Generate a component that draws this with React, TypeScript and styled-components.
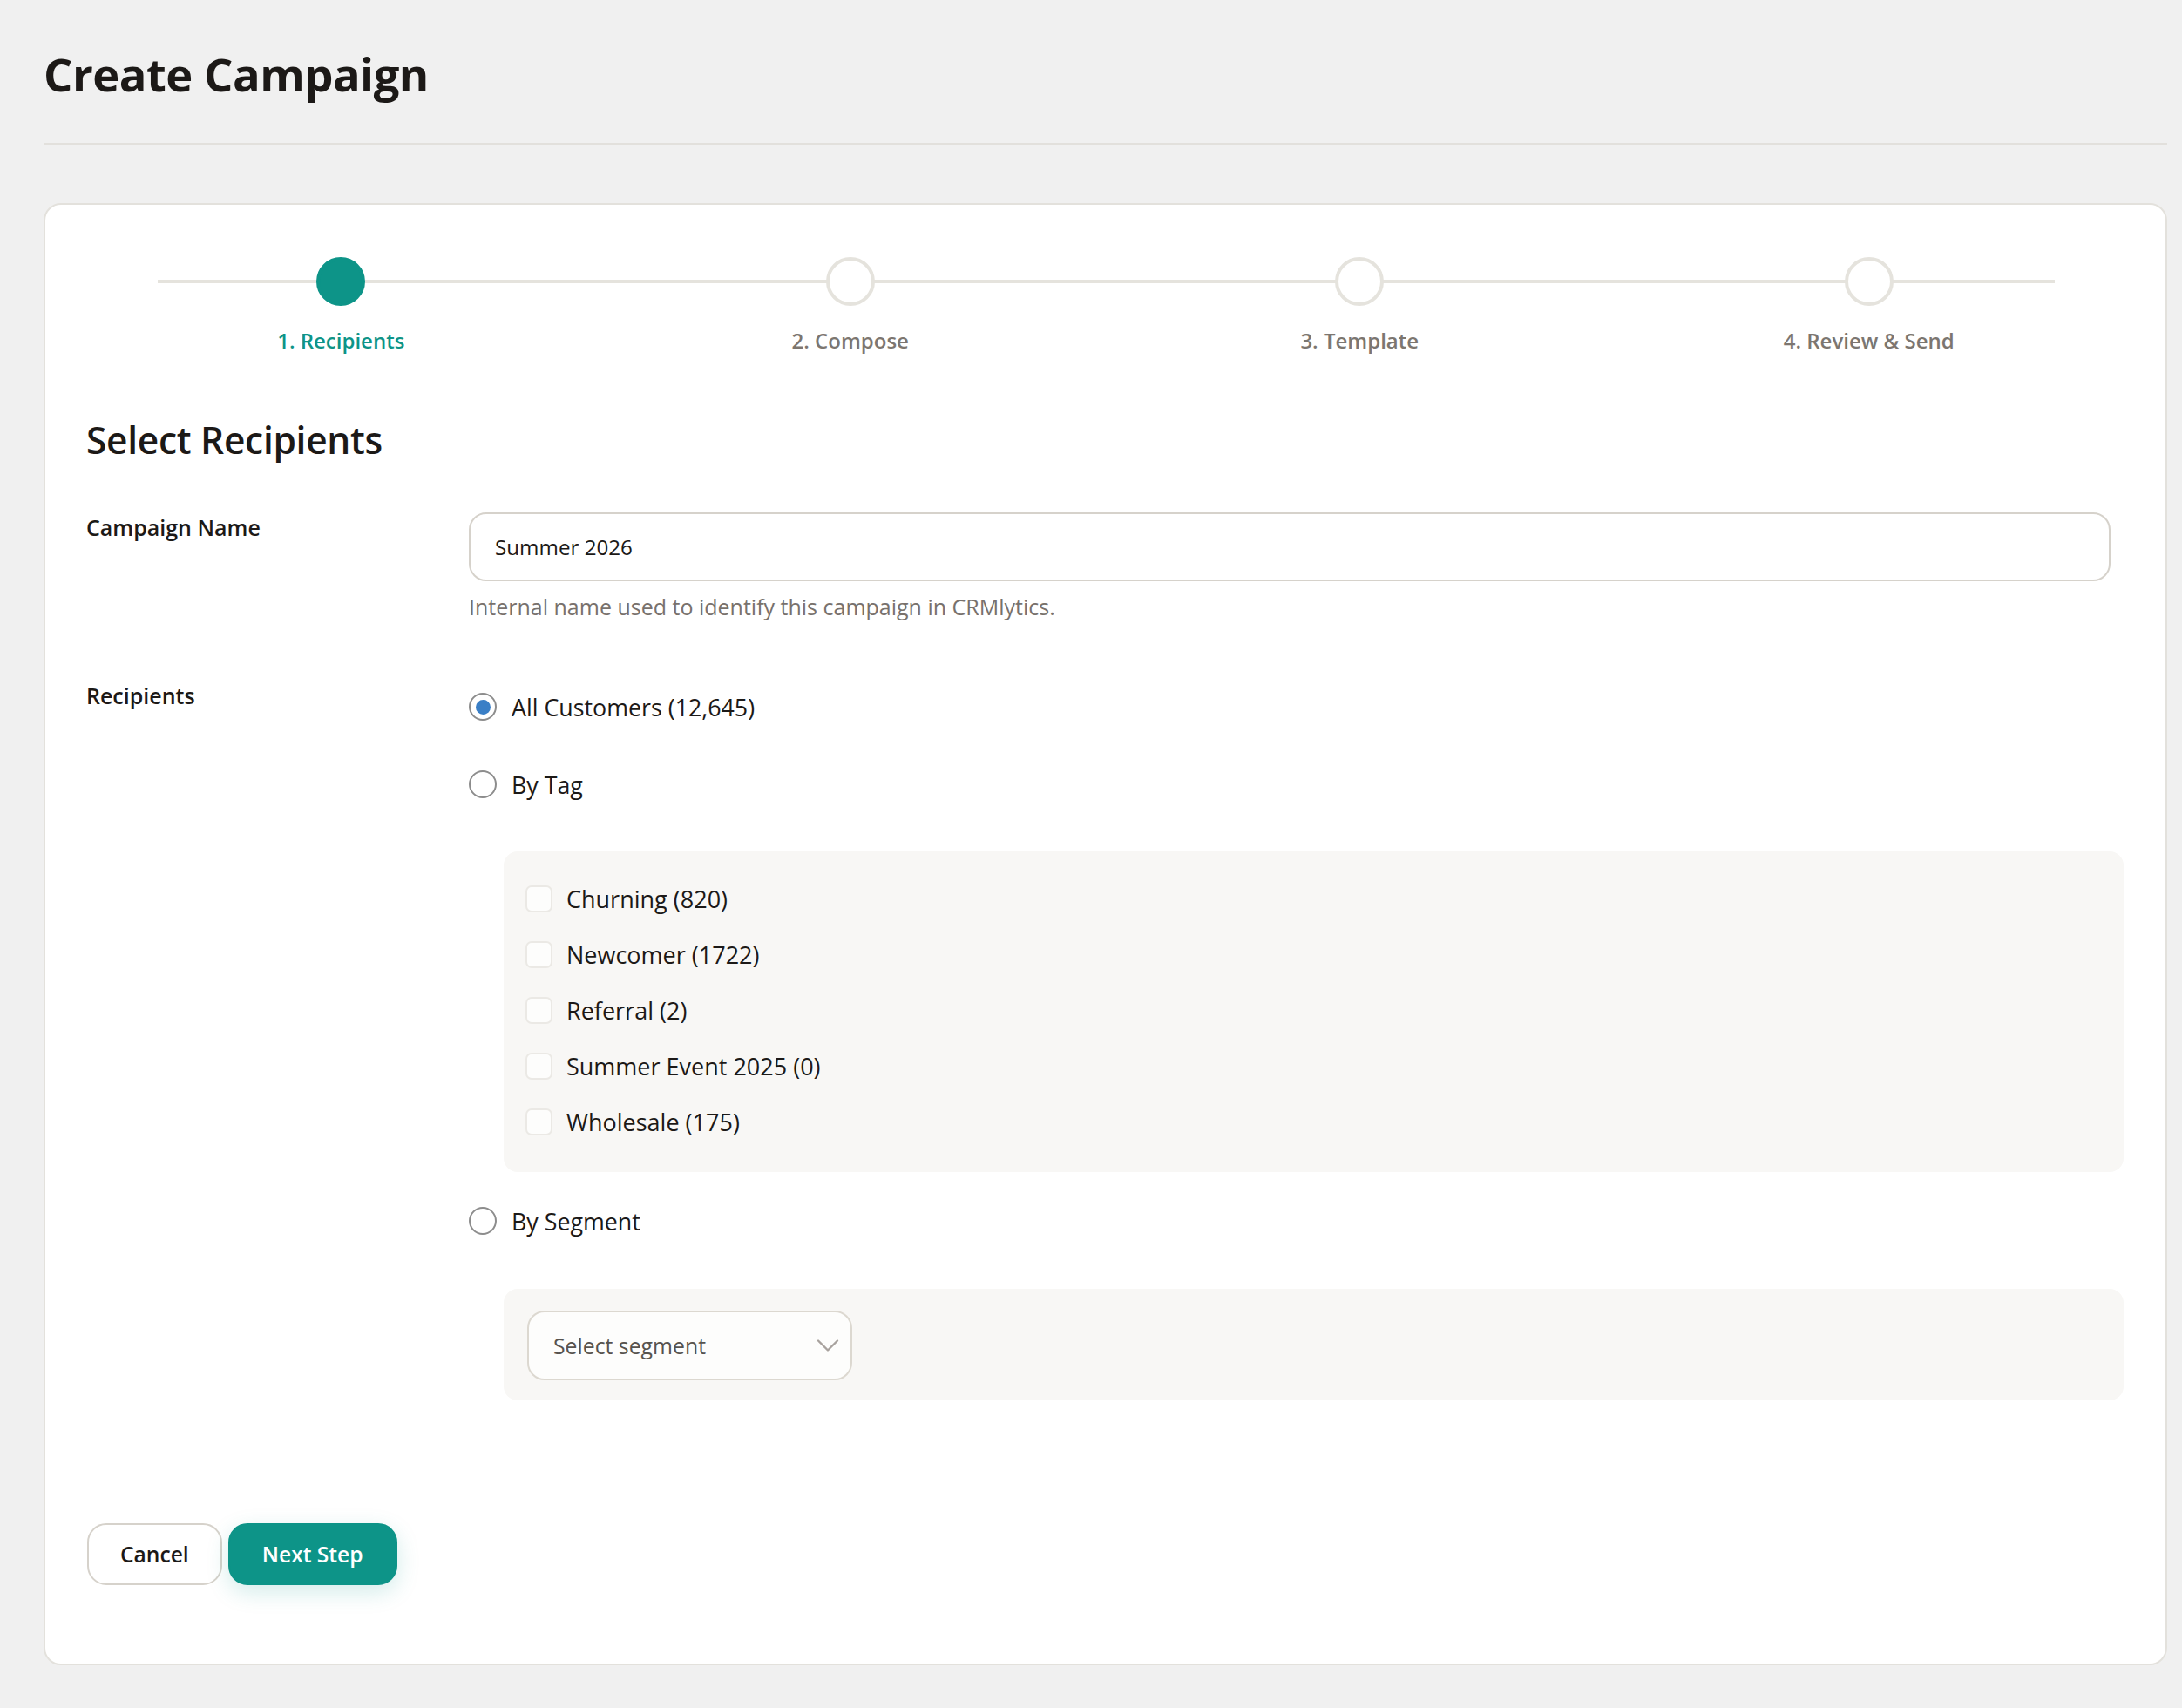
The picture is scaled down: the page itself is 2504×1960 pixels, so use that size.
import styled, { createGlobalStyle } from "styled-components";
import { ChevronDown } from "lucide-react";

const GlobalStyle = createGlobalStyle`
  body {
    margin: 0;
    background: #f0f0f0;
    font-family: "Open Sans", "Noto Sans", sans-serif;
    color: #1c1917;
  }
  * {
    box-sizing: border-box;
  }
`;

const teal = "#0d9488";

const Page = styled.div`
  padding: 0 17px 50px 50px;
`;

const Header = styled.header`
  padding: 53px 0 47px;
  border-bottom: 2px solid #e2e0dc;
`;

const PageTitle = styled.h1`
  margin: 0;
  font-size: 52.5px;
  line-height: 64px;
  font-weight: 700;
  letter-spacing: -0.5px;
`;

const Card = styled.section`
  margin-top: 67px;
  background: #fff;
  border: 2px solid #e3e1dc;
  border-radius: 20px;
  padding: 60px 48px 90px 47px;
`;

const Stepper = styled.ol`
  position: relative;
  display: grid;
  grid-template-columns: repeat(4, 1fr);
  margin: 0;
  padding: 0;
  list-style: none;
`;

const StepLine = styled.div`
  position: absolute;
  top: 26px;
  left: 82px;
  right: 79px;
  height: 4px;
  background: #e5e3dd;
`;

const Step = styled.li`
  position: relative;
  display: flex;
  flex-direction: column;
  align-items: center;
  gap: 25px;
`;

const StepDot = styled.span<{ $active?: boolean }>`
  width: 56px;
  height: 56px;
  border-radius: 50%;
  background: ${(p) => (p.$active ? teal : "#fff")};
  border: 4px solid ${(p) => (p.$active ? teal : "#e5e3dd")};
`;

const StepLabel = styled.span<{ $active?: boolean }>`
  font-size: 24px;
  line-height: 30px;
  font-weight: 600;
  color: ${(p) => (p.$active ? teal : "#7c7670")};
`;

const SectionTitle = styled.h2`
  margin: 74px 0 59px;
  font-size: 42.5px;
  line-height: 49px;
  font-weight: 600;
  letter-spacing: -0.3px;
`;

const FormRow = styled.div`
  display: grid;
  grid-template-columns: 439px 1fr;
  align-items: start;
  & + & {
    margin-top: 69px;
  }
`;

const FieldLabel = styled.label`
  font-size: 25px;
  line-height: 30px;
  font-weight: 600;
  padding-top: 2px;
`;

const Field = styled.div`
  display: flex;
  flex-direction: column;
`;

const TextInput = styled.input`
  width: calc(100% - 15px);
  height: 79px;
  padding: 0 28px;
  border: 2px solid #d6d2cb;
  border-radius: 20px;
  font: inherit;
  font-size: 24.2px;
  color: #1c1917;
  background: #fff;
  outline: none;
`;

const Hint = styled.p`
  margin: 13px 0 0;
  font-size: 25px;
  line-height: 32px;
  color: #78716c;
`;

const Options = styled.div`
  display: flex;
  flex-direction: column;
  gap: 33px;
  padding-top: 7px;
`;

const RadioRow = styled.label`
  display: flex;
  align-items: center;
  gap: 17px;
  height: 46px;
  font-size: 26.8px;
  cursor: pointer;
  & + & {
    margin-top: 43px;
  }
`;

const RadioMark = styled.span<{ $checked?: boolean }>`
  display: flex;
  align-items: center;
  justify-content: center;
  width: 32px;
  height: 32px;
  border-radius: 50%;
  border: 2px solid #8d8d8d;
  background: #fff;
  &::after {
    content: "";
    width: 17px;
    height: 17px;
    border-radius: 50%;
    background: ${(p) => (p.$checked ? "#3a7fc6" : "transparent")};
  }
`;

const SubPanel = styled.div<{ $gap: number }>`
  margin: ${(p) => p.$gap}px 0 0 40px;
  background: #f8f7f5;
  border-radius: 16px;
`;

const TagList = styled(SubPanel)`
  padding: 22px 25px 26px;
`;

const TagRow = styled.label`
  display: flex;
  align-items: center;
  gap: 16px;
  height: 64px;
  font-size: 27px;
  cursor: pointer;
`;

const CheckBox = styled.span`
  width: 31px;
  height: 31px;
  border: 2px solid #ebe9e5;
  border-radius: 7px;
  background: #fdfdfc;
`;

const SegmentPanel = styled(SubPanel)`
  padding: 25px 27px 23px;
`;

const SelectBox = styled.div`
  display: flex;
  align-items: center;
  justify-content: space-between;
  width: 373px;
  height: 80px;
  padding: 0 4px 0 28px;
  border: 2px solid #dcd8d0;
  border-radius: 20px;
  background: #fdfdfc;
  font-size: 24.8px;
  color: #57534e;
`;

const Actions = styled.div`
  display: flex;
  gap: 7px;
  margin-top: 141px;
  margin-left: 1px;
`;

const Button = styled.button<{ $primary?: boolean }>`
  height: 71px;
  padding: 0 ${(p) => (p.$primary ? "37px" : "36px")};
  border-radius: 22px;
  font: inherit;
  font-size: 24.6px;
  font-weight: 600;
  cursor: pointer;
  border: 2px solid ${(p) => (p.$primary ? teal : "#d6d2cb")};
  background: ${(p) => (p.$primary ? teal : "#fff")};
  color: ${(p) => (p.$primary ? "#fff" : "#1c1917")};
  box-shadow: ${(p) =>
    p.$primary ? "0 8px 26px rgba(13, 148, 136, 0.18)" : "none"};
`;

const steps = ["1. Recipients", "2. Compose", "3. Template", "4. Review & Send"];

const tags = [
  { name: "Churning", count: 820 },
  { name: "Newcomer", count: 1722 },
  { name: "Referral", count: 2 },
  { name: "Summer Event 2025", count: 0 },
  { name: "Wholesale", count: 175 },
];

export default function App() {
  return (
    <>
      <GlobalStyle />
      <Page>
        <Header>
          <PageTitle>Create Campaign</PageTitle>
        </Header>
        <Card>
          <Stepper>
            <StepLine />
            {steps.map((s, i) => (
              <Step key={s}>
                <StepDot $active={i === 0} />
                <StepLabel $active={i === 0}>{s}</StepLabel>
              </Step>
            ))}
          </Stepper>

          <SectionTitle>Select Recipients</SectionTitle>

          <FormRow>
            <FieldLabel>Campaign Name</FieldLabel>
            <Field>
              <TextInput defaultValue="Summer 2026" />
              <Hint>Internal name used to identify this campaign in CRMlytics.</Hint>
            </Field>
          </FormRow>

          <FormRow>
            <FieldLabel>Recipients</FieldLabel>
            <Options>
              <div>
                <RadioRow>
                  <RadioMark $checked />
                  All Customers (12,645)
                </RadioRow>
                <RadioRow>
                  <RadioMark />
                  By Tag
                </RadioRow>
              </div>
              <TagList $gap={21}>
                {tags.map((t) => (
                  <TagRow key={t.name}>
                    <CheckBox />
                    {t.name} ({t.count})
                  </TagRow>
                ))}
              </TagList>
              <RadioRow>
                <RadioMark />
                By Segment
              </RadioRow>
              <SegmentPanel $gap={22}>
                <SelectBox>
                  Select segment
                  <ChevronDown size={44} color="#a8a29e" strokeWidth={1.3} />
                </SelectBox>
              </SegmentPanel>
            </Options>
          </FormRow>

          <Actions>
            <Button>Cancel</Button>
            <Button $primary>Next Step</Button>
          </Actions>
        </Card>
      </Page>
    </>
  );
}
